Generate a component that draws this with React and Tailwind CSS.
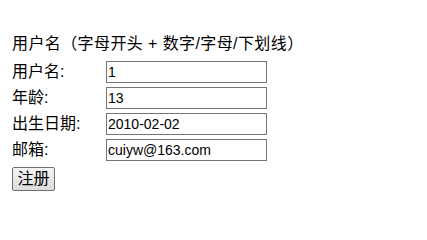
export default function App() {
  const rows = [
    ["用户名:", "1"],
    ["年龄:", "13"],
    ["出生日期:", "2010-02-02"],
    ["邮箱:", "cuiyw@163.com"],
  ];
  const cjk = { fontFamily: '"Liberation Sans", "Noto Sans CJK SC", sans-serif' };
  return (
    <div className="w-[427px] h-[232px] bg-white pl-[12px] pt-[34px] text-black" style={cjk}>
      <div className="text-[16px] leading-[20px] h-[25px] tracking-[0.4px]">用户名（字母开头 + 数字/字母/下划线）</div>
      <div className="flex flex-col gap-[4px] mt-[2px]">
        {rows.map(([label, value]) => (
          <div key={label} className="flex items-center h-[22px]">
            <div className="w-[94px] text-[16px] leading-[20px]">{label}</div>
            <input
              readOnly
              defaultValue={value}
              className="w-[161px] h-[22px] border border-[#767676] px-[1px] text-[14px] leading-[18px] outline-none text-black"
              style={{ fontFamily: '"Liberation Sans", Arial, sans-serif' }}
            />
          </div>
        ))}
      </div>
      <button className="mt-[6px] w-[43px] h-[24px] border border-[#707070] rounded-[2px] bg-gradient-to-b from-[#f4f4f4] to-[#dcdcdc] text-[16px] leading-[20px] flex items-center justify-center">
        注册
      </button>
    </div>
  );
}
